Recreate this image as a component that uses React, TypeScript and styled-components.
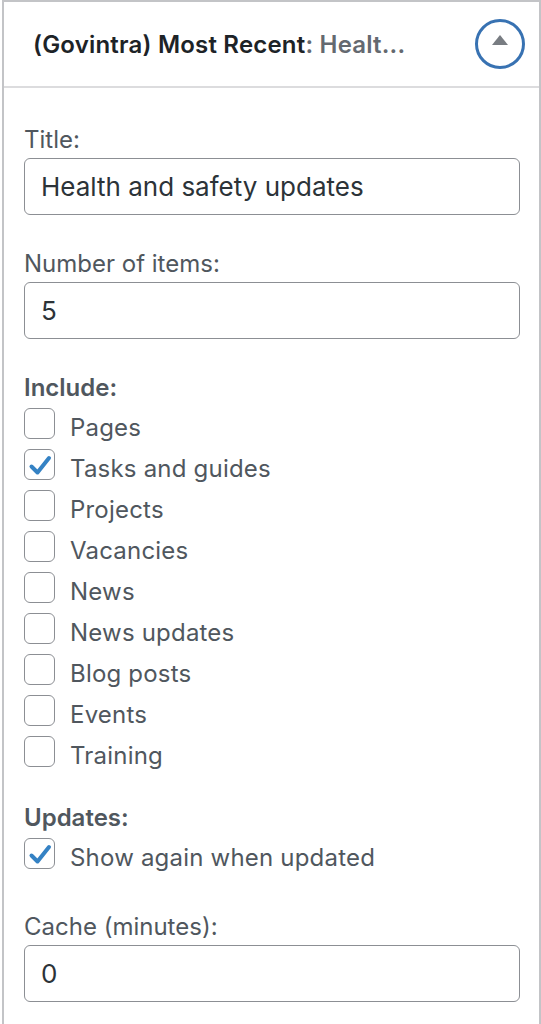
import React from 'react'
import styled, { createGlobalStyle } from 'styled-components'

const GlobalStyle = createGlobalStyle`
  html, body {
    margin: 0;
    padding: 0;
    background: #fff;
    font-family: Inter, "Liberation Sans", Arial, sans-serif;
  }
`

type Option = { label: string; checked?: boolean }

const includeOptions: Option[] = [
  { label: 'Pages' },
  { label: 'Tasks and guides', checked: true },
  { label: 'Projects' },
  { label: 'Vacancies' },
  { label: 'News' },
  { label: 'News updates' },
  { label: 'Blog posts' },
  { label: 'Events' },
  { label: 'Training' },
]

const Check = ({ checked }: { checked?: boolean }) => (
  <Box>
    {checked && (
      <svg width="28" height="28" viewBox="0 0 28 28">
        <path d="M5.5 15.5 L11.5 21.5 L23 7" fill="none" stroke="#3582c4" strokeWidth="4" strokeLinecap="round" strokeLinejoin="round" />
      </svg>
    )}
  </Box>
)

const App = () => {
  return (
    <>
      <GlobalStyle />
      <Panel>
        <Header>
          <HeaderTitle>
            (Govintra) Most Recent<Muted>: Healt...</Muted>
          </HeaderTitle>
          <Toggle>
            <Triangle />
          </Toggle>
        </Header>
        <Body>
          <Field>
            <Label>Title:</Label>
            <Input defaultValue="Health and safety updates" />
          </Field>
          <Field>
            <Label>Number of items:</Label>
            <Input defaultValue="5" />
          </Field>
          <Group>
            <GroupLabel>Include:</GroupLabel>
            {includeOptions.map((o) => (
              <Row key={o.label}>
                <Check checked={o.checked} />
                <RowText>{o.label}</RowText>
              </Row>
            ))}
          </Group>
          <Group $last>
            <GroupLabel>Updates:</GroupLabel>
            <Row>
              <Check checked />
              <RowText>Show again when updated</RowText>
            </Row>
          </Group>
          <Field>
            <Label>Cache (minutes):</Label>
            <Input defaultValue="0" />
          </Field>
        </Body>
      </Panel>
    </>
  )
}

const Panel = styled.div`
  margin-left: 2px;
  width: 539px;
  box-sizing: border-box;
  border: 2px solid #c3c4c7;
  border-bottom: none;
  min-height: 1024px;
`
const Header = styled.div`
  height: 84px;
  border-bottom: 2px solid #dcdcde;
  display: flex;
  align-items: center;
  justify-content: space-between;
  padding: 0 14px 0 29px;
`
const HeaderTitle = styled.div`
  font-size: 24px;
  font-weight: 600;
  color: #1d2327;
  letter-spacing: 0.2px;
  white-space: nowrap;
`
const Muted = styled.span`
  color: #646970;
`
const Toggle = styled.div`
  width: 50px;
  height: 50px;
  box-sizing: border-box;
  border: 3px solid #3872b2;
  border-radius: 50%;
  display: flex;
  align-items: center;
  justify-content: center;
`
const Triangle = styled.div`
  width: 0;
  height: 0;
  border-left: 8px solid transparent;
  border-right: 8px solid transparent;
  border-bottom: 10px solid #787c82;
  margin-bottom: 9px;
`
const Body = styled.div`
  padding: 38px 19px 20px 20px;
  display: flex;
  flex-direction: column;
`
const Field = styled.div`
  display: flex;
  flex-direction: column;
  margin-bottom: 35px;
`
const Label = styled.label`
  font-size: 24px;
  line-height: 28px;
  color: #50575e;
  margin-bottom: 4px;
`
const Input = styled.input`
  height: 57px;
  box-sizing: border-box;
  border: 1.5px solid #8c8f94;
  border-radius: 6px;
  padding: 0 16px;
  font-family: Inter, "Liberation Sans", Arial, sans-serif;
  font-size: 26px;
  color: #2c3338;
  outline: none;
`
const Group = styled.div<{ $last?: boolean }>`
  display: flex;
  flex-direction: column;
  margin-bottom: ${(p) => (p.$last ? '39px' : '32px')};
`
const GroupLabel = styled.div`
  font-size: 24px;
  line-height: 28px;
  font-weight: 600;
  color: #50575e;
  margin-bottom: 1px;
`
const Row = styled.div`
  display: flex;
  align-items: center;
  height: 41px;
`
const Box = styled.div`
  width: 31px;
  height: 31px;
  box-sizing: border-box;
  border: 1.5px solid #8c8f94;
  border-radius: 6px;
  display: flex;
  align-items: center;
  justify-content: center;
  flex-shrink: 0;
`
const RowText = styled.span`
  margin-left: 15px;
  margin-top: 7px;
  font-size: 24px;
  letter-spacing: 0.2px;
  color: #50575e;
`

export default App
